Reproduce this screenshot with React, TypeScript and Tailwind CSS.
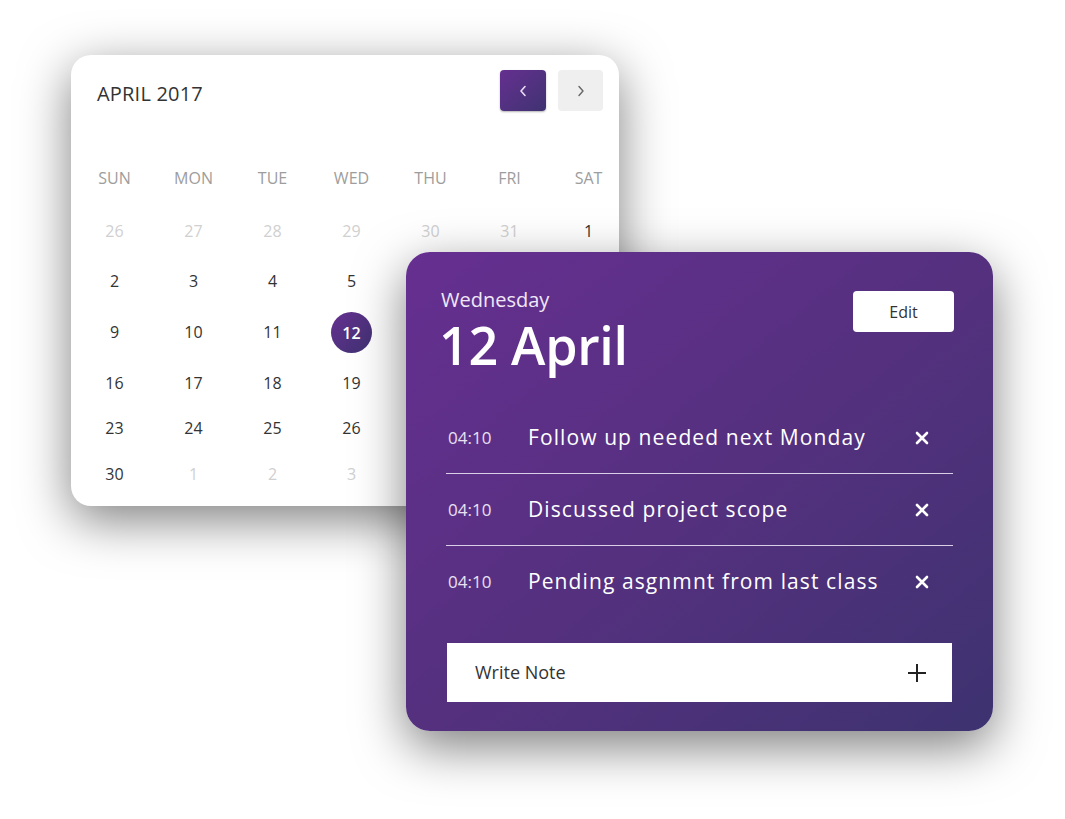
import React from 'react'

type Day = { n: number; muted?: boolean; active?: boolean }

const weekdays = ['SUN', 'MON', 'TUE', 'WED', 'THU', 'FRI', 'SAT']

const weeks: { h: string; days: Day[] }[] = [
  { h: 'h-[53px]', days: [26, 27, 28, 29, 30, 31].map((n) => ({ n, muted: true })).concat([{ n: 1 }]) },
  { h: 'h-[50px]', days: [2, 3, 4, 5, 6, 7, 8].map((n) => ({ n })) },
  { h: 'h-[51px]', days: [9, 10, 11, 12, 13, 14, 15].map((n) => ({ n, active: n === 12 })) },
  { h: 'h-[51px]', days: [16, 17, 18, 19, 20, 21, 22].map((n) => ({ n })) },
  { h: 'h-[45px]', days: [23, 24, 25, 26, 27, 28, 29].map((n) => ({ n })) },
  { h: 'h-[46px]', days: [{ n: 30 }, { n: 1, muted: true }, { n: 2, muted: true }, { n: 3, muted: true }, { n: 4, muted: true }, { n: 5, muted: true }, { n: 6, muted: true }] },
]

const notes = ['Follow up needed next Monday', 'Discussed project scope', 'Pending asgnmnt from last class']

const Calendar = () => (
  <div className="absolute left-[71px] top-[55px] w-[548px] h-[451px] bg-white rounded-[20px] shadow-[0_14px_50px_rgba(0,0,0,0.5)] font-['Open_Sans',sans-serif]">
    {/* header */}
    <div className="flex items-center justify-between pl-[26px] pr-[16px] pt-[15px]">
      <span className="text-[20px] leading-[30px] text-[#333] tracking-[0.2px] mt-[6px]">APRIL 2017</span>
      <div className="flex gap-[12px]">
        <button className="w-[46px] h-[41px] rounded-[4px] bg-gradient-to-br from-[#652f90] to-[#3f3272] flex items-center justify-center shadow-[0_1px_2px_rgba(0,0,0,0.3)]">
          <svg width="10" height="12" viewBox="0 0 10 12" fill="none" stroke="#e9dcf5" strokeWidth="1.6" strokeLinecap="round" strokeLinejoin="round">
            <path d="M7 1.5 L3 6 L7 10.5" />
          </svg>
        </button>
        <button className="w-[45px] h-[41px] rounded-[4px] bg-[#efefef] flex items-center justify-center">
          <svg width="10" height="12" viewBox="0 0 10 12" fill="none" stroke="#666" strokeWidth="1.4" strokeLinecap="round" strokeLinejoin="round">
            <path d="M3 1.5 L7 6 L3 10.5" />
          </svg>
        </button>
      </div>
    </div>

    {/* grid */}
    <div className="ml-[4px] w-[553px] mt-[55px]">
      <div className="grid grid-cols-7 h-[24px] items-center">
        {weekdays.map((d) => (
          <span key={d} className="text-center text-[16px] text-[#9d9d9d]">{d}</span>
        ))}
      </div>
      {weeks.map((w, i) => (
        <div key={i} className={`grid grid-cols-7 items-end ${w.h}`}>
          {w.days.map((d, j) => (
            <div key={j} className="flex justify-center">
              {i > 0 && j > 3 ? null : d.active ? (
                <span className="w-[41px] h-[41px] -mb-[9px] rounded-full bg-gradient-to-br from-[#652f90] to-[#3f3272] text-white text-[16px] font-semibold flex items-center justify-center">
                  {d.n}
                </span>
              ) : (
                <span className={`text-[16px] leading-[24px] ${d.muted ? 'text-[#d0d0d0]' : 'text-[#333]'}`}>{d.n}</span>
              )}
            </div>
          ))}
        </div>
      ))}
    </div>
  </div>
)

const DayPanel = () => (
  <div className="absolute left-[406px] top-[252px] w-[587px] h-[479px] rounded-[24px] bg-gradient-to-br from-[#662f91] via-[#55307f] to-[#3d3270] shadow-[0_16px_50px_rgba(0,0,0,0.5)] px-[40px] pt-[36px]">
    <div className="flex justify-between">
      <div className="font-['Open_Sans',sans-serif] text-white -ml-[5px]">
        <div className="text-[20px] leading-[24px] text-[#f0e8f8]">Wednesday</div>
        <div className="text-[52px] leading-[64px] mt-[1px] font-semibold -ml-[2px] tracking-[-0.3px]">12 April</div>
      </div>
      <button className="mt-[3px] mr-[-1px] w-[101px] h-[41px] rounded-[4px] bg-white text-[16px] text-[#333] font-['Open_Sans',sans-serif]">
        Edit
      </button>
    </div>

    <div className="mt-[25px]">
      {notes.map((n, i) => (
        <div key={n} className={`flex items-center h-[72px] ${i < 2 ? 'border-b border-[#d9cfe6]' : ''}`}>
          <span className="w-[82px] pl-[2px] text-[17px] text-[#e9e0f2] font-['Open_Sans',sans-serif]">04:10</span>
          <span className="flex-1 text-[21px] text-white font-['Open_Sans',sans-serif] tracking-[1.1px]">{n}</span>
          <svg className="mr-[24px]" width="14" height="14" viewBox="0 0 14 14" stroke="#fff" strokeWidth="2.6" strokeLinecap="round">
            <path d="M2 2 L12 12 M12 2 L2 12" />
          </svg>
        </div>
      ))}
    </div>

    <div className="mt-[25px] ml-[1px] w-[505px] h-[59px] bg-white flex items-center justify-between pl-[28px] pr-[25px]">
      <span className="text-[18px] text-[#333] font-['Open_Sans',sans-serif]">Write Note</span>
      <svg width="20" height="20" viewBox="0 0 20 20" stroke="#222" strokeWidth="2">
        <path d="M10 1 V19 M1 10 H19" />
      </svg>
    </div>
  </div>
)

export default function App() {
  return (
    <div className="relative w-[1065px] h-[819px] bg-white overflow-hidden">
      <Calendar />
      <DayPanel />
    </div>
  )
}
